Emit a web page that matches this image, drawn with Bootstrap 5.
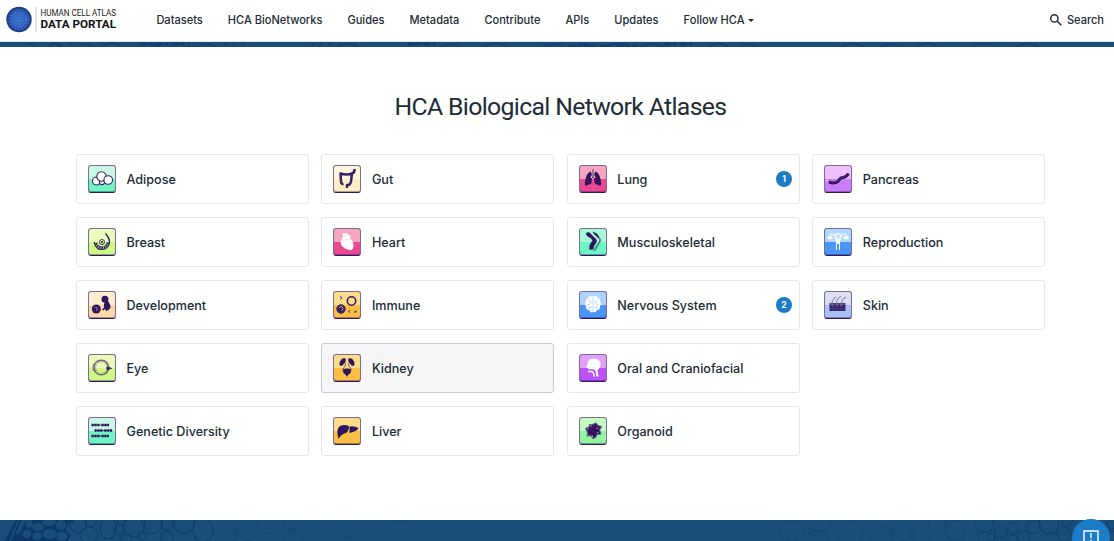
<!DOCTYPE html>
<html lang="en">
<head>
<meta charset="utf-8">
<meta name="viewport" content="width=device-width, initial-scale=1">
<title>HCA Data Portal</title>
<link href="https://cdn.jsdelivr.net/npm/bootstrap@5.3.0/dist/css/bootstrap.min.css" rel="stylesheet">
<style>
body{font-family:Inter,"Liberation Sans",sans-serif;color:#212b36;height:541px;overflow:hidden;background:#fff}
.topbar{height:42px;border-bottom:1px solid #e1e3e6;padding:0 10px 3px 6px}
.brand{width:112px;height:27px}
.mainlinks{margin-left:38.4px;gap:25.05px;font-size:11.05px;font-weight:500;line-height:16px;padding-top:1px}
.mainlinks a,.find{color:#212b36;text-decoration:none;white-space:nowrap}
.find{font-size:11.05px;font-weight:500;line-height:16px;gap:5px;padding-top:1px}
.caret{display:inline-block;border:3px solid transparent;border-top:3.5px solid #212b36;border-bottom:0;margin-left:4px;vertical-align:2px}
.strip{height:5px;background:#194e78}
.strip svg,.foot svg{display:block}
.content{height:473px;padding:43px 69px 0 76px}
.heading{font:400 24.8px/34px Roboto,sans-serif;margin:0 0 30px;letter-spacing:-.66px;white-space:nowrap;color:#212b36}
.atlases{display:grid;grid-auto-flow:column;grid-template-rows:repeat(5,50px);grid-template-columns:repeat(4,1fr);gap:13px 12.7px}
.atlas{border:1px solid #e6e7e9;border-radius:3px;padding:0 6.5px 0 11px;font-size:12.6px;font-weight:500;color:#212b36;text-decoration:none;background:#fff}
.atlas.current{background:#f5f5f5;border-color:#c4cdd5}
.atlas .title{margin-left:10.5px;padding-top:2px}
.tile{width:28px;height:28px;border:1px solid #7d6c99;border-bottom-color:#30185f;box-shadow:inset 0 -1px rgba(48,24,95,.4);border-radius:3px;background:linear-gradient(var(--a) 50%,var(--b) 50%);flex:none}
.tile svg{display:block;width:26px;height:25px}
.count{width:16px;height:16px;border-radius:50%;background:#1c7cc7;color:#fff;font-size:8.6px;font-weight:700}
.foot{height:21px;background:#194e78}
.feedback{position:fixed;left:1072px;top:519px;width:38px;height:38px;border-radius:50%;background:#1c7cc7}
.feedback svg{display:block;margin:11px auto 0}
</style>
</head>
<body class="d-flex flex-column">
<header class="topbar d-flex align-items-center">
 <svg class="brand flex-shrink-0" viewBox="0 0 112 27" aria-label="Human Cell Atlas Data Portal">
  <defs><radialGradient id="globe"><stop offset="0" stop-color="#3a75cf"/><stop offset=".65" stop-color="#2b59b5"/><stop offset="1" stop-color="#1d3683"/></radialGradient></defs>
  <circle cx="13" cy="13.5" r="12.7" fill="url(#globe)"/>
  <g fill="none" stroke="#78b0e8" stroke-width=".9" stroke-dasharray="1 2.1" opacity=".75"><circle cx="13" cy="13.5" r="2.5"/><circle cx="13" cy="13.5" r="5"/><circle cx="13" cy="13.5" r="7.4" stroke-dasharray="1.300 1.700"/><circle cx="13" cy="13.5" r="9.8"/></g>
  <path d="M30 1v25" stroke="#c8cace"/>
  <text x="34.5" y="10.4" font-family="Roboto" font-size="8.2" textLength="75.5" lengthAdjust="spacingAndGlyphs" fill="#222">HUMAN CELL ATLAS</text>
  <text x="34.5" y="22.4" font-family="Roboto" font-weight="700" font-size="11.6" textLength="75.5" lengthAdjust="spacingAndGlyphs" fill="#111">DATA PORTAL</text>
 </svg>
 <nav class="mainlinks d-flex">
  <a href="#">Datasets</a><a href="#">HCA BioNetworks</a><a href="#">Guides</a><a href="#">Metadata</a><a href="#">Contribute</a><a href="#">APIs</a><a href="#">Updates</a><a href="#">Follow HCA<span class="caret"></span></a>
 </nav>
 <a class="find d-flex align-items-center ms-auto" href="#"><svg width="12" height="12" viewBox="0 0 12 12" fill="none" stroke="#212b36" stroke-width="1.5"><circle cx="4.4" cy="4.4" r="3.6"/><path d="m7 7 4.3 4.3"/></svg>Search</a>
</header>
<div class="strip"><svg width="1114" height="5" fill="none"><g stroke="#0e3567" stroke-width="1.3" opacity=".55"><path d="M26 5q5-6 9 0m14 0q5-7 13 0m6 0 4-5m6 5q8-6 16 0m8 0q10-8 19 0m15 0q12-6 24 0m8 0q9-6 18 0h12q8-6 18 0m7 0 5-5m4 5 4-5m4 5 5-5M311 5l4-5m3 5 5-5m4 5 5-5m5 5q12-7 21 0m50 0q10-9 19 0m12 0q12-5 20 0m24 0q15-7 25 0m34 0q12-5 22 0m14 0q7-6 15 0m12 0q15-7 25 0m10 0q12-6 24 0m45 0q9-7 20 0m10 0q10-5 19 0m83 0q12-7 24 0m14 0q12-5 24 0m14 0q12-7 20 0m34 0q12-7 24 0m20 0q12-7 24 0"/><path d="M140 2h50m218 0h32m128 2h70m26-2h30" stroke-width="3" stroke-dasharray="7 2 3 4"/></g></svg></div>

<main class="content">
 <h1 class="heading text-center">HCA Biological Network Atlases</h1>
 <div class="atlases">
  <a href="#" class="atlas d-flex align-items-center"><span class="tile" style="--a:#c8f8e3;--b:#6ff5c2"><svg viewBox="0 0 26 25" fill="#fff" stroke="#36206a" stroke-width="1.1"><circle cx="7.5" cy="15" r="4"/><circle cx="13" cy="16" r="2.600"/><circle cx="12.5" cy="10.500" r="4.700"/><circle cx="19.2" cy="14" r="4.3"/></svg></span><span class="title">Adipose</span></a>
  <a href="#" class="atlas d-flex align-items-center"><span class="tile" style="--a:#e9fab9;--b:#cef886"><svg viewBox="0 0 26 25" fill="none" stroke="#36206a"><path d="M16.500 4.5q6 7 3 12T10 20q-4-2-4.7-7" stroke-width="1.4"/><path d="M7 14q2 4.5 6 4.5t6-5" stroke-width="2.300" stroke-dasharray="1.8 .6"/><circle cx="13" cy="13" r="2.5" stroke-width=".9"/><circle cx="13" cy="13" r=".7"/></svg></span><span class="title">Breast</span></a>
  <a href="#" class="atlas d-flex align-items-center"><span class="tile" style="--a:#fdecce;--b:#fad8a5"><svg viewBox="0 0 26 25" fill="#2f155d"><circle cx="7.3" cy="17" r="4.5"/><path d="M14 4q3-1 5 1 1 2 0 4 3 4 2.4 7-2 3-4.4 3l-1-2-2 1.5-1-.8 2-2.3q-.4-3 .5-5-3 .5-3-2.400-.3-3 1.500-4Z"/><path d="m5 16 2.500-1 2 2-2 2m0-4v4" fill="none" stroke="#9d8191" stroke-width=".6"/></svg></span><span class="title">Development</span></a>
  <a href="#" class="atlas d-flex align-items-center"><span class="tile" style="--a:#e9fab9;--b:#cef886"><svg viewBox="0 0 26 25" fill="none" stroke="#736073"><circle cx="12.3" cy="12.5" r="7.3" stroke-width="1.500"/><circle cx="12.3" cy="12.5" r="5.7" stroke-width=".4"/><path d="M4.500 9q-1.500 3.500 0 7M17 8l4 5-4 4" stroke-width=".8"/><path d="m18 12 4.500 1.400-4.500 1.200Z" fill="#36206a" stroke="#36206a"/></svg></span><span class="title">Eye</span></a>
  <a href="#" class="atlas d-flex align-items-center"><span class="tile" style="--a:#c8f8e3;--b:#6ff5c2"><svg viewBox="0 0 26 25" fill="none" stroke="#2f155d" stroke-width="2.600"><path d="M2.500 7h8.500m1.500 0H20M5.500 12.500H14m1.300 0h8.500M2.500 18H11m1.500 0H20" stroke-dasharray="2.2 .65"/><path d="M3 7h16M6 12.500h17M3 18h16" stroke-width=".8"/></svg></span><span class="title">Genetic Diversity</span></a>

  <a href="#" class="atlas d-flex align-items-center"><span class="tile" style="--a:#fff4dc;--b:#ffedc6"><svg viewBox="0 0 26 25" fill="none" stroke="#36206a" stroke-width="2.500" stroke-linejoin="round"><path d="M20.500 3q.3 3.500-2.500 4.500-5 2-11.500 0l.5 7.500q0 3.500 2.500 3M18 7.500l-1 8q-1 4-4 3.500v3"/></svg></span><span class="title">Gut</span></a>
  <a href="#" class="atlas d-flex align-items-center"><span class="tile" style="--a:#f5a5c0;--b:#eb4894"><svg viewBox="0 0 26 25" fill="#fff"><path d="M9 7 8 5l2-1 1 1 1-1 2 1 .5 1 2 .5-.5 3q4 3 3.500 8-.5 4-3.500 3.500-5-.5-8-4-2.500-3-.5-6Z"/><path d="m10 8 3-2m-4 6q3-3 6-1" fill="none" stroke="#f7bfd1" stroke-width=".6"/></svg></span><span class="title">Heart</span></a>
  <a href="#" class="atlas d-flex align-items-center"><span class="tile" style="--a:#fddb89;--b:#f9be43"><svg viewBox="0 0 26 25" fill="none" stroke="#36206a"><circle cx="17.500" cy="9" r="4.200" stroke-width="1.6"/><circle cx="7" cy="17" r="4.200" fill="#36206a" stroke-width="1"/><path d="m5 16 2-2 2 2-1 3" stroke="#f9be43" stroke-width=".8"/><path d="m6 4.500 2 1.200L6.500 7.500M16 18l-1.500 1.500L16 20.500m5-2 1.500 1.500h-2.500" stroke-width=".9"/></svg></span><span class="title">Immune</span></a>
  <a href="#" class="atlas current d-flex align-items-center"><span class="tile" style="--a:#fddb89;--b:#f9be43"><svg viewBox="0 0 26 25" fill="#2f155d"><path d="M11.500 3.500q-3.500-1.500-5.500 3-1.500 4 1 4.500 2-.3 3-2.500 2.500-2 1.500-5Zm3 0q3.500-1.500 5.500 3 1.500 4-1 4.500-2-.3-3-2.500-2.500-2-1.500-5ZM9 14.500q4-2 8 0 1 3-3 5.500l-1 2-1-2q-4-2.500-3-5.500Z"/><path d="M11 7.500q1.500 3-1 5-2 2-.5 4M15 7.500q-1.500 3 1 5 2 2 .5 4" fill="none" stroke="#56376a" stroke-width=".8"/></svg></span><span class="title">Kidney</span></a>
  <a href="#" class="atlas d-flex align-items-center"><span class="tile" style="--a:#fddb89;--b:#f9be43"><svg viewBox="0 0 26 25" fill="#2f155d"><path d="M4.500 21Q1.500 11 6 8q5-2 9 .500 0 4-3 6.500-5 1-7.500 6ZM15.500 8.500Q20 7.500 24.500 10q-1 3-4 3.500l-5 1.500Z"/></svg></span><span class="title">Liver</span></a>

  <a href="#" class="atlas d-flex align-items-center"><span class="tile" style="--a:#f5a5c0;--b:#eb4894"><svg viewBox="0 0 26 25" fill="#2f155d"><path d="M10.500 5.500Q6 6.500 4.800 17.500q0 3 2 2l4.500-2 .5-3V8Zm5 0Q20 6.500 21.200 17.500q0 3-2 2l-4.500-2-.5-3V8Z"/><path d="M13 3v8m0-2-2 3m2-3 2 3" fill="none" stroke="#f5c1d0" stroke-width="1.700"/><path d="M13 3v8l-2 2m2-2 2 2" fill="none" stroke="#36206a" stroke-width=".9"/></svg></span><span class="title">Lung</span><span class="count d-flex align-items-center justify-content-center ms-auto">1</span></a>
  <a href="#" class="atlas d-flex align-items-center"><span class="tile" style="--a:#a5f9d4;--b:#6ff5c2"><svg viewBox="0 0 26 25" fill="#2f155d"><path d="m6 4 3-1 6 6q3 2 1 5-2 2-2.500 6l-4 1q-1-6 3-9-1-3-3-3.500Q6 7 6 4ZM12.500 2.500q6 2 7 7l-2-1-4-4Z"/><path d="m16 4 5 7-8 11m7-10-5 10m4-13 1 4" fill="none" stroke="#36206a" stroke-width=".6"/></svg></span><span class="title">Musculoskeletal</span></a>
  <a href="#" class="atlas d-flex align-items-center"><span class="tile" style="--a:#add3fc;--b:#4a95f7"><svg viewBox="0 0 26 25" fill="#fff"><path d="M12.500 4.500Q9 3 8 6 5.500 6.500 6 9q-2 3 0 5-.5 4 3 4 1.500 3.500 4 2 2.500 1.500 4-2 3.500 0 3-4 2-2 0-5 .5-2.500-2-3-1-3-4.500-1.500Z"/><path d="M13 5v15M8 8l3 2-1 2-3 1m2 5v-3h3m6-7-3 2 1 2 3 1m-2 5v-3h-3" fill="none" stroke="#91bdfa" stroke-width=".6"/></svg></span><span class="title">Nervous System</span><span class="count d-flex align-items-center justify-content-center ms-auto">2</span></a>
  <a href="#" class="atlas d-flex align-items-center"><span class="tile" style="--a:#e2a0fa;--b:#bd51f8"><svg viewBox="0 0 26 25" fill="#fff"><path d="M8 13.500 6 12.500l1.500-3q0-6 6.500-6 7 .500 6.500 7-.5 3-3 5l1 6h-2.200l-.8-6q-3-2-6-1Z"/><path d="M8 16.500h3q3 0 3 5" fill="none" stroke="#fff" stroke-width="1.600"/></svg></span><span class="title">Oral and Craniofacial</span></a>
  <a href="#" class="atlas d-flex align-items-center"><span class="tile" style="--a:#c4fbc0;--b:#91f6a0"><svg viewBox="0 0 26 25"><path d="m12.500 6.500 3.500-1.500 2 2.500 3.500 1-2 3.500 1.500 4-4 .5-1.500 3-2.500 1-2-3-4 .5.500-4-2-3.500 3.500-1.500.5-2.500Z" fill="#2f155d" stroke="#67538a" stroke-width="1.100" stroke-linejoin="round"/><path d="m10.500 6.500 1 2M18 10l-1.500.5m2 4.500-1.500-.5m-9 1.500-1 .5m5.500 2.500v-1.500M7 10.500l1.500.500" stroke="#c4fbc0" stroke-width=".7"/></svg></span><span class="title">Organoid</span></a>

  <a href="#" class="atlas d-flex align-items-center"><span class="tile" style="--a:#edc0fa;--b:#ca7cf8"><svg viewBox="0 0 26 25" fill="none"><path d="M4 16q5 2 9-.5 2-4 5-4t5.500-4" stroke="#2f155d" stroke-width="3"/><path d="m3 15 4 1 6-1 3-3 5-2" stroke="#68417a" stroke-width=".6"/><path d="M1 14.500h2" stroke="#eee" stroke-width="1.200"/></svg></span><span class="title">Pancreas</span></a>
  <a href="#" class="atlas d-flex align-items-center"><span class="tile" style="--a:#add8fd;--b:#4a95f7"><svg viewBox="0 0 26 25" fill="#fff" stroke="#fff"><path d="M9.500 5.500q3.500-2.500 7 0l-1 5-1.500 4h-2l-1.500-4Z" stroke-width=".6"/><circle cx="13" cy="7.500" r="2.200" fill="#c6e1fd" stroke="none"/><path d="M10 6.500Q7 3.500 4 5.500M16 6.500q3-3 6-1M11.500 13v8m3-8v8" fill="none" stroke-width="1"/><path d="M2 8.500q3-3.500 6 0-3 3.500-6 0Zm16 0q3-3.500 6 0-3 3.500-6 0Z" stroke-width=".5"/></svg></span><span class="title">Reproduction</span></a>
  <a href="#" class="atlas d-flex align-items-center"><span class="tile" style="--a:#dbdef1;--b:#a8c1f8"><svg viewBox="0 0 26 25" fill="#2f155d"><path d="M4.500 11h16v8h-16Z" opacity=".93"/><path d="M7 14q-1-6 4-9m1 9q-2-6 4-10m1 10q-2-6 4-9" fill="none" stroke="#75699a" stroke-width=".9"/><path d="M5 12h15M8 12v3m4-3v3m4-3v3" stroke="#9589b2" stroke-width=".6"/><path d="M5 17h15" stroke="#8579a8" stroke-width=".6" stroke-dasharray="1 1"/></svg></span><span class="title">Skin</span></a>
 </div>
</main>

<footer class="foot"><svg width="1114" height="21" fill="none">
 <path fill="#0c3869" d="M4 21 16 0h58l-5 21Z"/>
 <g fill="#194e78"><path d="M0 0h14L4 21H0Zm18 0h1.500L11 21H9Z"/><path d="m22 0 4 0-6 12q-3 4-4 1Z"/><ellipse cx="29" cy="3" rx="3.500" ry="5"/><ellipse cx="38" cy="7" rx="6" ry="4"/><ellipse cx="27" cy="14" rx="4" ry="4"/><ellipse cx="37" cy="16" rx="4.500" ry="4"/><ellipse cx="50" cy="14" rx="7" ry="5"/><ellipse cx="49" cy="2" rx="7" ry="4"/><ellipse cx="61" cy="5" rx="5" ry="5"/><ellipse cx="62" cy="16" rx="5.500" ry="4.500"/><ellipse cx="71" cy="9" rx="4.500" ry="6"/><ellipse cx="72" cy="20" rx="4" ry="3"/></g>
 <g stroke="#0e3c6c" stroke-width="1"><ellipse cx="78" cy="5" rx="8" ry="8"/><ellipse cx="89" cy="15" rx="9" ry="8"/><circle cx="91" cy="2" r="5"/><ellipse cx="108" cy="8" rx="8" ry="11"/><circle cx="119" cy="10" r="5"/><circle cx="121" cy="1" r="4"/><ellipse cx="134" cy="7" rx="10" ry="10"/><circle cx="126" cy="19" r="5"/><circle cx="142" cy="16" r="4"/><ellipse cx="153" cy="4" rx="9" ry="10"/><circle cx="167" cy="4" r="6"/><circle cx="167" cy="17" r="6"/><ellipse cx="184" cy="4" rx="10" ry="10"/><ellipse cx="203" cy="10" rx="10" ry="12"/></g>
 <g stroke="#153f6d" stroke-width=".9" opacity=".65"><ellipse cx="225" cy="15" rx="11" ry="11"/><ellipse cx="247" cy="9" rx="11" ry="11"/><ellipse cx="271" cy="5" rx="12" ry="9"/><ellipse cx="291" cy="1" rx="8" ry="8"/><ellipse cx="293" cy="17" rx="10" ry="7"/></g>
 <g stroke="#153f6d" opacity=".25"><ellipse cx="316" cy="10" rx="14" ry="12"/><ellipse cx="345" cy="7" rx="13" ry="10"/><ellipse cx="370" cy="14" rx="13" ry="9"/><ellipse cx="400" cy="12" rx="13" ry="12"/></g>
 <g stroke="#123d66" opacity=".45"><ellipse cx="792" cy="11" rx="13" ry="10"/><ellipse cx="819" cy="4" rx="12" ry="7"/><ellipse cx="817" cy="18" rx="12" ry="7"/><ellipse cx="850" cy="13" rx="13" ry="12"/><circle cx="881" cy="17" r="11"/><ellipse cx="903" cy="8" rx="11" ry="12"/><ellipse cx="921" cy="15" rx="10" ry="8"/><ellipse cx="937" cy="5" rx="9" ry="10"/><circle cx="955" cy="10" r="10"/><circle cx="971" cy="18" r="8"/></g>
 <g stroke="#0e3769" stroke-width="1" opacity=".7"><ellipse cx="984" cy="4" rx="10" ry="8"/><circle cx="991" cy="17" r="4"/><circle cx="1001" cy="12" r="6"/><circle cx="1013" cy="8" r="5.500"/><circle cx="1013" cy="20" r="5"/><circle cx="1024" cy="17" r="6"/><circle cx="1034" cy="7" r="7"/><circle cx="1049" cy="4" r="10"/><circle cx="1064" cy="14" r="7"/><circle cx="1067" cy="1" r="5"/><circle cx="1112" cy="4" r="5"/><circle cx="1112" cy="16" r="5"/></g>
</svg></footer>
<div class="feedback"><svg width="16" height="16" viewBox="0 0 16 16" fill="none" stroke="#fff" stroke-width="1.400"><path d="M1 1h14v13H1ZM8 3v5m0 1.500V11"/></svg></div>
<script src="https://cdn.jsdelivr.net/npm/bootstrap@5.3.0/dist/js/bootstrap.bundle.min.js"></script>
</body>
</html>
